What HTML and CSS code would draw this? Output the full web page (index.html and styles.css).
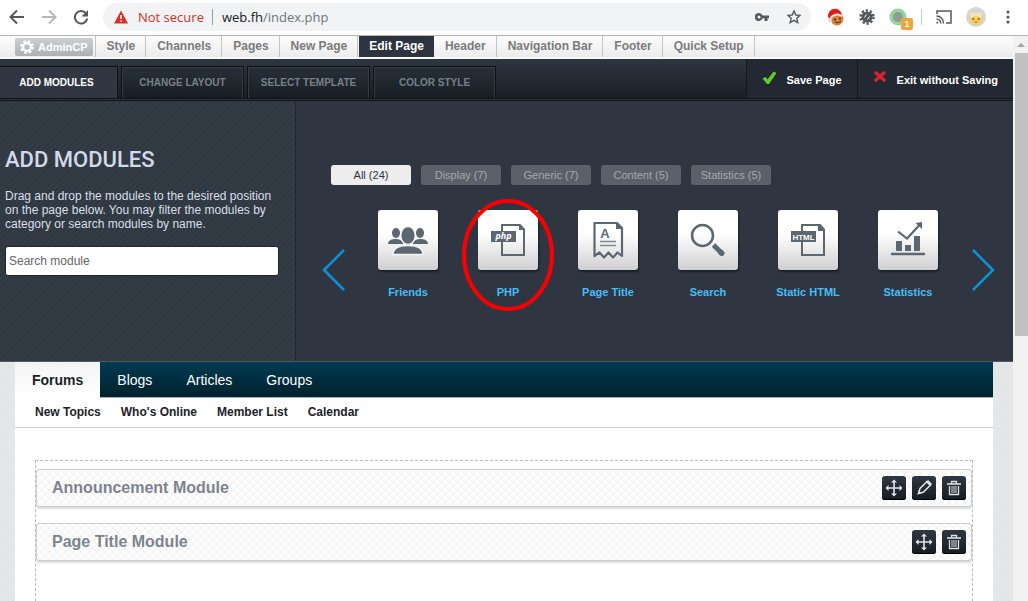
FILE: index.html
```html
<!DOCTYPE html>
<html lang="en">
  <head>
    <meta charset="UTF-8" />
    <meta name="viewport" content="width=device-width, initial-scale=1.0" />
    <title>Edit Page</title>
    <link rel="stylesheet" href="styles.css">
  </head>
  <body>
    <svg class="defs" width="0" height="0" aria-hidden="true">
      <symbol id="move" viewBox="0 0 24 24">
        <path d="M12 5v14M5 12h14" stroke="#e2e5e8" stroke-width="1.600"/>
        <path d="M12 3.500l3 3H9zM12 20.500l3-3H9zM3.500 12l3-3v6zM20.500 12l-3-3v6z" fill="#e2e5e8"/>
      </symbol>
      <symbol id="trash" viewBox="0 0 24 24">
        <path d="M9.500 7.500v-2h5v2" fill="none" stroke="#dfe2e5" stroke-width="1.300"/>
        <path d="M5 8h14" stroke="#dfe2e5" stroke-width="1.600"/>
        <path d="M7.500 10v8.500h9V10" fill="none" stroke="#dfe2e5" stroke-width="1.300"/>
        <path d="M10 10v7M12 10v7M14 10v7" stroke="#dfe2e5"/>
      </symbol>
    </svg>

    <header class="browser">
      <button class="tool" aria-label="Back"><svg width="16" height="16" viewBox="0 0 16 16"><path d="M15 8H2M8 1.500L1.500 8 8 14.500" fill="none" stroke="#55585c" stroke-width="2"/></svg></button>
      <button class="tool" aria-label="Forward"><svg width="16" height="16" viewBox="0 0 16 16"><path d="M1 8h13M8 1.500L14.500 8 8 14.500" fill="none" stroke="#b6b8ba" stroke-width="2"/></svg></button>
      <button class="tool" aria-label="Reload"><svg width="16" height="16" viewBox="0 0 16 16"><path d="M13 4.500A6.200 6.200 0 1 0 14.200 9.500" fill="none" stroke="#55585c" stroke-width="2"/><path d="M15 1v6.500H8.500z" fill="#55585c"/></svg></button>
      <div class="address">
        <svg width="14" height="14" viewBox="0 0 14 14"><path d="M7 .5L14 13.500H0z" fill="#d93025"/><path d="M7 5v4M7 10.300v1.500" stroke="#fff" stroke-width="1.500"/></svg>
        <span class="insecure">Not secure</span>
        <span class="url">web.fh<span class="path">/index.php</span></span>
        <button class="key" aria-label="Saved passwords"><svg width="14" height="10" viewBox="0 0 14 10"><path fill-rule="evenodd" d="M4 1a4 4 0 1 0 3.600 5.300H9.500V9h3V6.300H14V3.500H7.600A4 4 0 0 0 4 1zM4 3.500a1.500 1.500 0 1 1 0 3 1.500 1.500 0 0 1 0-3z" fill="#55585c"/></svg></button>
        <button class="star" aria-label="Bookmark"><svg width="14" height="14" viewBox="0 0 14 14"><path d="M7 1l1.800 4 4.300.4-3.300 2.900 1 4.300L7 10.400l-3.800 2.200 1-4.300L.9 5.400 5.200 5z" fill="none" stroke="#55585c" stroke-width="1.400"/></svg></button>
      </div>
      <div class="extensions">
        <svg width="18" height="18" viewBox="0 0 18 18"><circle cx="10" cy="11" r="6.500" fill="#d9823a"/><circle cx="8" cy="11.500" r="1" fill="#4a2411"/><circle cx="13" cy="10.500" r="1" fill="#4a2411"/><path d="M8 14c2 1 4 1 6-1" stroke="#4a2411" fill="none"/><path d="M1 9C1 3 5 0 10 1c3 1 5 4 5 7C11 5 6 6 3 11z" fill="#e01a1d"/><path d="M3.500 10C6 6.500 11 5.500 15 8" stroke="#f3e9e2" stroke-width="2" fill="none"/><circle cx="3" cy="12" r="2" fill="#ead9d2"/></svg>
        <svg width="16" height="16" viewBox="0 0 16 16"><circle cx="8" cy="8" r="5.500" fill="#55585c"/><circle cx="8" cy="8" r="6.500" fill="none" stroke="#55585c" stroke-width="2.400" stroke-dasharray="2.300 1.784"/><path d="M5.500 8.500l2-3M8.500 10.500l2-3" stroke="#fff" fill="none"/></svg>
        <span class="blocker">
          <svg width="18" height="18" viewBox="0 0 18 18"><circle cx="9" cy="9" r="8.500" fill="#8fd79b"/><circle cx="9" cy="9" r="5" fill="#929a94"/></svg>
          <span class="count">1</span>
        </span>
        <span class="divider"></span>
        <svg width="16" height="14" viewBox="0 0 16 14"><path d="M1 4V1h14v12h-5" fill="none" stroke="#55585c" stroke-width="1.500"/><path d="M.5 6a7 7 0 0 1 7 7.500M.5 9a4.300 4.300 0 0 1 4.300 4.500" fill="none" stroke="#55585c" stroke-width="1.400"/><path d="M.5 11.500a2 2 0 0 1 2 2h-2z" fill="#55585c"/></svg>
        <svg width="20" height="20" viewBox="0 0 20 20"><circle cx="10" cy="10" r="10" fill="#d5d3d4"/><path d="M4 11l1-6 3 1h4l3-1 1 6z" fill="#f4e6b4"/><path d="M3.500 10c2 1 3-1 6.500-1s5 2 6.500 1c0 5-3 8-6.500 8s-6.500-3-6.500-8z" fill="#f6cf64"/><circle cx="7.300" cy="12" r="1" fill="#8a5a20"/><circle cx="12.700" cy="12" r="1" fill="#8a5a20"/><path d="M8.500 14.500l1.500 1 1.500-1" stroke="#b06a2c" fill="none"/></svg>
        <svg class="menu" width="4" height="14" viewBox="0 0 4 14" fill="#55585c"><circle cx="2" cy="2" r="1.600"/><circle cx="2" cy="7" r="1.600"/><circle cx="2" cy="12" r="1.600"/></svg>
      </div>
    </header>

    <div class="viewport">
      <div class="content">
        <nav class="admin-bar">
          <a class="admincp" href="#"><svg width="14" height="14" viewBox="0 0 14 14"><circle cx="7" cy="7" r="3.900" fill="none" stroke="#fff" stroke-width="2.200"/><circle cx="7" cy="7" r="5.800" fill="none" stroke="#fff" stroke-width="2.200" stroke-dasharray="2.500 2.055"/></svg>AdminCP</a>
          <a href="#">Style</a>
          <a href="#">Channels</a>
          <a href="#">Pages</a>
          <a href="#">New Page</a>
          <a class="active" href="#">Edit Page</a>
          <a href="#">Header</a>
          <a href="#">Navigation Bar</a>
          <a href="#">Footer</a>
          <a href="#">Quick Setup</a>
        </nav>

        <div class="editor-bar">
          <div class="tabs">
            <button class="tab active">ADD MODULES</button>
            <button class="tab">CHANGE LAYOUT</button>
            <button class="tab">SELECT TEMPLATE</button>
            <button class="tab">COLOR STYLE</button>
          </div>
          <div class="actions">
            <button><svg width="15" height="16" viewBox="0 0 15 16"><path d="M.5 8.500l3-1.500 2 2.500L11.500 1.500 14.500 3 7 14H5z" fill="#5fce26"/></svg>Save Page</button>
            <button><svg width="14" height="16" viewBox="0 0 14 16"><path d="M2 2l10 9M12 2L2 11" stroke="#d8252b" stroke-width="3.200"/></svg>Exit without Saving</button>
          </div>
        </div>

        <section class="panel">
          <div class="side">
            <h1>ADD MODULES</h1>
            <p>Drag and drop the modules to the desired position on the page below. You may filter the modules by category or search modules by name.</p>
            <input type="text" placeholder="Search module" aria-label="Search module" />
          </div>
          <div class="picker">
            <div class="filters">
              <button class="active">All (24)</button>
              <button>Display (7)</button>
              <button>Generic (7)</button>
              <button>Content (5)</button>
              <button>Statistics (5)</button>
            </div>
            <div class="carousel">
              <button class="arrow" aria-label="Previous"><svg width="24" height="42" viewBox="0 0 24 42"><path d="M23 1L3 21l20 20" fill="none" stroke="#0d93d8" stroke-width="2.500"/></svg></button>
              <ul class="modules">
                <li>
                  <span class="tile"><svg width="60" height="60" viewBox="0 0 60 60" fill="#5c6772"><ellipse cx="18" cy="23" rx="4" ry="5"/><ellipse cx="42" cy="23" rx="4" ry="5"/><path d="M10 34c0-4 4-5 8-5 3 0 5 1 7 3v2zM50 34c0-4-4-5-8-5-3 0-5 1-7 3v2z"/><g stroke="#f5f5f6" stroke-width="1.500"><ellipse cx="30" cy="25.500" rx="7.300" ry="9"/><path d="M15 44.500c0-6 6-9 15-9s15 3 15 9z"/></g></svg></span>
                  <a href="#">Friends</a>
                </li>
                <li>
                  <span class="tile"><svg width="60" height="60" viewBox="0 0 60 60"><path d="M24 15h18l4 4.500V45H24z" fill="none" stroke="#5c6772" stroke-width="2"/><path d="M41 14l6 6h-6z" fill="#5c6772"/><path d="M13 21h25v11H13z" fill="#5c6772"/><text class="php" x="25.500" y="29" text-anchor="middle">php</text></svg></span>
                  <a href="#">PHP</a>
                  <svg class="marker" width="94" height="114" viewBox="0 0 94 114"><ellipse cx="47" cy="57" rx="44" ry="54" fill="none" stroke="#f90000" stroke-width="4"/></svg>
                </li>
                <li>
                  <span class="tile"><svg width="60" height="60" viewBox="0 0 60 60"><path d="M16.500 46V13H39l5 5v28l-4.500-3.500-4.500 5-4.500-5-4.500 5-4.500-5z" fill="none" stroke="#5c6772" stroke-width="2.200" stroke-linejoin="round"/><path d="M38 12l7 7h-7z" fill="#5c6772"/><path d="M22 31.500h16M22 35.500h16" stroke="#7d8994" stroke-width="1.500"/><text class="letter" x="27" y="28" text-anchor="middle">A</text></svg></span>
                  <a href="#">Page Title</a>
                </li>
                <li>
                  <span class="tile"><svg width="60" height="60" viewBox="0 0 60 60" fill="none" stroke="#5c6772"><circle cx="24.500" cy="25.500" r="10.500" stroke-width="2.500"/><path d="M35.500 35l8.500 8.500" stroke-width="5"/><path d="M43 42.500l.7.7" stroke-width="5.500" stroke-linecap="round"/></svg></span>
                  <a href="#">Search</a>
                </li>
                <li>
                  <span class="tile"><svg width="60" height="60" viewBox="0 0 60 60"><path d="M24 15h18l4 4.500V45H24z" fill="none" stroke="#5c6772" stroke-width="2"/><path d="M40 14l7 7h-7z" fill="#5c6772"/><path d="M13 21h25v11H13z" fill="#5c6772"/><text class="html" x="25.500" y="29.500" text-anchor="middle">HTML</text></svg></span>
                  <a href="#">Static HTML</a>
                </li>
                <li>
                  <span class="tile"><svg width="60" height="60" viewBox="0 0 60 60" fill="#5c6772"><path d="M18 31h6v10h-6zM27 35h6v6h-6zM36 26h6v15h-6z"/><path d="M14 44h32" stroke="#5c6772" stroke-width="2.500" stroke-linecap="round"/><path d="M20 21.500l9 7L41.500 15" fill="none" stroke="#5c6772" stroke-width="2.200"/><path d="M44 12v7l-6.500-6z"/></svg></span>
                  <a href="#">Statistics</a>
                </li>
              </ul>
              <button class="arrow" aria-label="Next"><svg width="24" height="42" viewBox="0 0 24 42"><path d="M2 1l20 20L2 41" fill="none" stroke="#0d93d8" stroke-width="2.500"/></svg></button>
            </div>
          </div>
        </section>

        <div class="site">
          <main class="page">
            <nav class="main-nav">
              <a class="active" href="#">Forums</a>
              <a href="#">Blogs</a>
              <a href="#">Articles</a>
              <a href="#">Groups</a>
            </nav>
            <nav class="sub-nav">
              <a href="#">New Topics</a>
              <a href="#">Who's Online</a>
              <a href="#">Member List</a>
              <a href="#">Calendar</a>
            </nav>
            <div class="dropzone">
              <div class="module">
                <h2>Announcement Module</h2>
                <button aria-label="Move"><svg width="24" height="24"><use href="#move"/></svg></button>
                <button aria-label="Edit"><svg width="24" height="24" viewBox="0 0 24 24"><path d="M6.500 17.500l1.500-5 7-7 3.500 3.500-7 7z" fill="none" stroke="#e2e5e8" stroke-width="1.500"/><path d="M14 6l2-2 4 4-2 2zM5.500 18.500l1-4 3 3z" fill="#e2e5e8"/></svg></button>
                <button aria-label="Delete"><svg width="24" height="24"><use href="#trash"/></svg></button>
              </div>
              <div class="module">
                <h2>Page Title Module</h2>
                <button aria-label="Move"><svg width="24" height="24"><use href="#move"/></svg></button>
                <button aria-label="Delete"><svg width="24" height="24"><use href="#trash"/></svg></button>
              </div>
            </div>
          </main>
        </div>
      </div>
      <div class="scrollbar">
        <svg width="15" height="17" viewBox="0 0 15 17"><path d="M4 11l4-4 4 4z" fill="#a3a3a3"/></svg>
        <div class="thumb"></div>
      </div>
    </div>
  </body>
</html>
```
FILE: styles.css
```css
* {
  box-sizing: border-box;
}

body {
  margin: 0;
  height: 100vh;
  display: flex;
  flex-direction: column;
  overflow: hidden;
  font-family: "Liberation Sans", Arial, sans-serif;
  font-size: 12px;
}

.defs {
  position: absolute;
}

svg {
  display: block;
  flex: none;
}

a {
  text-decoration: none;
}

button {
  border: 0;
  padding: 0;
  background: none;
  font-family: inherit;
  cursor: pointer;
}

/* browser toolbar */
.browser {
  flex: none;
  height: 36px;
  padding: 0 18px 1px 9px;
  display: flex;
  align-items: center;
  gap: 16px;
  background: #fff;
  border-bottom: 1px solid #b6b4b6;
}

.address {
  flex: 1;
  height: 28px;
  margin-left: -2px;
  padding: 0 10px 0 11px;
  display: flex;
  align-items: center;
  border-radius: 14px;
  background: #f1f3f4;
  font-family: "Open Sans", sans-serif;
  font-size: 13px;
}

.insecure {
  margin-left: 10px;
  padding-right: 8px;
  border-right: 1px solid #9a9da0;
  line-height: 16px;
  color: #d93025;
}

.url {
  flex: 1;
  margin-left: 9px;
  color: #202124;
}

.path {
  color: #70757a;
}

.star {
  margin-left: 18px;
}

.extensions {
  display: flex;
  align-items: center;
  gap: 14px;
}

.menu {
  margin-left: 6px;
}

.blocker {
  position: relative;
}

.count {
  position: absolute;
  left: 12px;
  top: 10px;
  width: 12px;
  height: 12px;
  border-radius: 2px;
  background: #f0a53c;
  color: #fff;
  font-size: 9px;
  font-weight: bold;
  line-height: 12px;
  text-align: center;
}

.divider {
  width: 1px;
  height: 16px;
  background: #c8cacc;
}

.viewport {
  flex: 1;
  min-height: 0;
  display: flex;
}

.content {
  flex: 1;
  min-width: 0;
  overflow: hidden;
  display: flex;
  flex-direction: column;
}

.scrollbar {
  flex: none;
  width: 15px;
  background: #f1f1f1;
}

.thumb {
  height: 50%;
  margin-left: 2px;
  background: #c1c1c1;
}

/* admin links */
.admin-bar {
  flex: none;
  height: 23px;
  padding-left: 15px;
  display: flex;
  background: linear-gradient(#fcfcfc, #ececec);
  border-bottom: 2px solid #f8f8f8;
}

.admin-bar a {
  padding: 0 10px 0 11px;
  border-right: 1px solid #c4c4c4;
  color: #7b7b7b;
  font-weight: bold;
  line-height: 20px;
}

.admin-bar .admincp {
  height: 18px;
  margin: 2px 2px 0 0;
  padding: 0 5px;
  display: flex;
  align-items: center;
  gap: 4px;
  border: 0;
  border-radius: 2px;
  background: linear-gradient(#cdcfd1, #adb0b2);
  color: #fff;
  font-size: 11px;
}

.admin-bar .admincp + a {
  border-left: 1px solid #c4c4c4;
}

.admin-bar .active {
  margin-left: 1px;
  padding: 0 10px;
  border: 0;
  background: #2d3440;
  color: #fff;
}

/* editor tabs */
.editor-bar {
  flex: none;
  height: 42px;
  display: flex;
  justify-content: space-between;
  border-bottom: 3px double #0f1317;
  background: linear-gradient(#2e3640, #191f25);
}

.tabs {
  display: flex;
  gap: 3px;
  margin-left: -5px;
  padding-top: 7px;
}

.tab {
  width: 123px;
  border: 1px solid #0d1115;
  border-bottom: 0;
  box-shadow: inset -1px 1px #343c44, inset 1px 0 #343c44;
  background: linear-gradient(#28303a, #171d22);
  color: #77808a;
  font-size: 10px;
  font-weight: bold;
}

.tab.active {
  background: #303642;
  color: #fff;
}

.actions {
  display: flex;
}

.actions button {
  display: flex;
  align-items: center;
  gap: 10px;
  padding: 3px 15px 0;
  border-left: 1px solid #14191e;
  background: #222932;
  color: #fff;
  font-size: 11px;
  font-weight: bold;
}

.actions svg {
  margin-bottom: 4px;
}

/* module picker */
.panel {
  flex: none;
  height: 261px;
  display: flex;
  border-bottom: 1px solid #54585c;
  background: #303641;
}

.side {
  flex: none;
  width: 296px;
  padding: 46px 16px 0 5px;
  border-right: 1px solid #20262e;
  background: linear-gradient(135deg, #2f3740 25%, #343d45 25% 50%, #2f3740 50% 75%, #343d45 75%);
  background-size: 6px 6px;
  color: #d9dfea;
}

.side h1 {
  margin: 0 0 16px;
  font-family: Roboto, sans-serif;
  font-size: 22px;
  font-weight: 500;
  line-height: 26px;
  color: #d3d9ea;
}

.side p {
  margin: 0;
  line-height: 14px;
}

.side input {
  width: 100%;
  height: 30px;
  margin-top: 15px;
  padding: 0 3px;
  border: 1px solid #20262e;
  border-radius: 3px;
  background: #fff;
  font: 12px "Liberation Sans", Arial, sans-serif;
}

.side input::placeholder {
  color: #666;
}

.picker {
  flex: 1;
  padding: 64px 18px 0 25px;
}

.filters {
  display: flex;
  gap: 10px;
  padding-left: 10px;
}

.filters button {
  width: 80px;
  height: 20px;
  border-radius: 3px;
  background: #5b616a;
  color: #a5a8ad;
  font-size: 11px;
}

.filters .active {
  background: #ededed;
  color: #2d3440;
}

.carousel {
  display: flex;
  align-items: center;
  justify-content: space-between;
  margin-top: 25px;
}

.arrow {
  padding-top: 31px;
}

.modules {
  display: flex;
  margin: 0;
  padding: 0;
  list-style: none;
}

.modules li {
  position: relative;
  width: 100px;
  display: flex;
  flex-direction: column;
  align-items: center;
  gap: 16px;
}

.modules a {
  color: #45bdf7;
  font-size: 11px;
  font-weight: bold;
  line-height: 13px;
}

.tile {
  border-radius: 3px;
  background: linear-gradient(#fff 40%, #cfcfd2);
  box-shadow: 1px 2px 2px #1b2027;
}

.tile text {
  fill: #fff;
  font-weight: bold;
}

.tile .php {
  font-family: "Open Sans", sans-serif;
  font-size: 9px;
  font-style: italic;
}

.tile .html {
  font-family: "Liberation Sans Narrow", "Liberation Sans", sans-serif;
  font-size: 8px;
}

.tile .letter {
  fill: #5c6772;
  font-size: 13px;
}

.marker {
  position: absolute;
  left: 3px;
  top: -12px;
}

/* forum page */
.site {
  flex: 1;
  padding: 0 20px 0 15px;
  display: flex;
  background: repeating-linear-gradient(45deg, #e1e3e5 0 1px, #e6e7e9 1px 3px);
}

.page {
  flex: 1;
  display: flex;
  flex-direction: column;
  background: #fff;
}

.main-nav {
  height: 36px;
  display: flex;
  border-bottom: 1px solid #a9b4ba;
  background: linear-gradient(#003a52, #00222d);
}

.main-nav a {
  padding: 0 17px;
  color: #fff;
  font-size: 14px;
  line-height: 36px;
}

.main-nav .active {
  height: 36px;
  background: linear-gradient(#f4f4f4, #fff);
  color: #1c2228;
  font-weight: bold;
}

.sub-nav {
  height: 30px;
  padding-left: 20px;
  display: flex;
  gap: 20px;
  border-bottom: 1px solid #d0d0d0;
}

.sub-nav a {
  color: #1c2228;
  font-weight: bold;
  line-height: 28px;
}

.dropzone {
  flex: 1;
  margin: 32px 20px 0;
  padding-top: 8px;
  border: 1px dashed #b8b8b8;
  border-bottom: 0;
}

.module {
  height: 38px;
  margin-bottom: 16px;
  padding: 0 5px 0 15px;
  display: flex;
  align-items: center;
  gap: 6px;
  border: 1px solid #c9ced2;
  border-radius: 3px;
  background-color: #fdfdfd;
  background-image:
    linear-gradient(45deg, transparent 47%, #f0f0f0 47% 53%, transparent 53%),
    linear-gradient(-45deg, transparent 47%, #f0f0f0 47% 53%, transparent 53%);
  background-size: 8px 8px;
  box-shadow: 0 2px 2px #dcdcdc;
}

.module h2 {
  flex: 1;
  margin: 0;
  color: #7d848d;
  font-size: 16px;
}

.module button {
  border-radius: 3px;
  background: linear-gradient(#2f3743, #171c22);
  box-shadow: inset 0 -1px #000;
}
```
